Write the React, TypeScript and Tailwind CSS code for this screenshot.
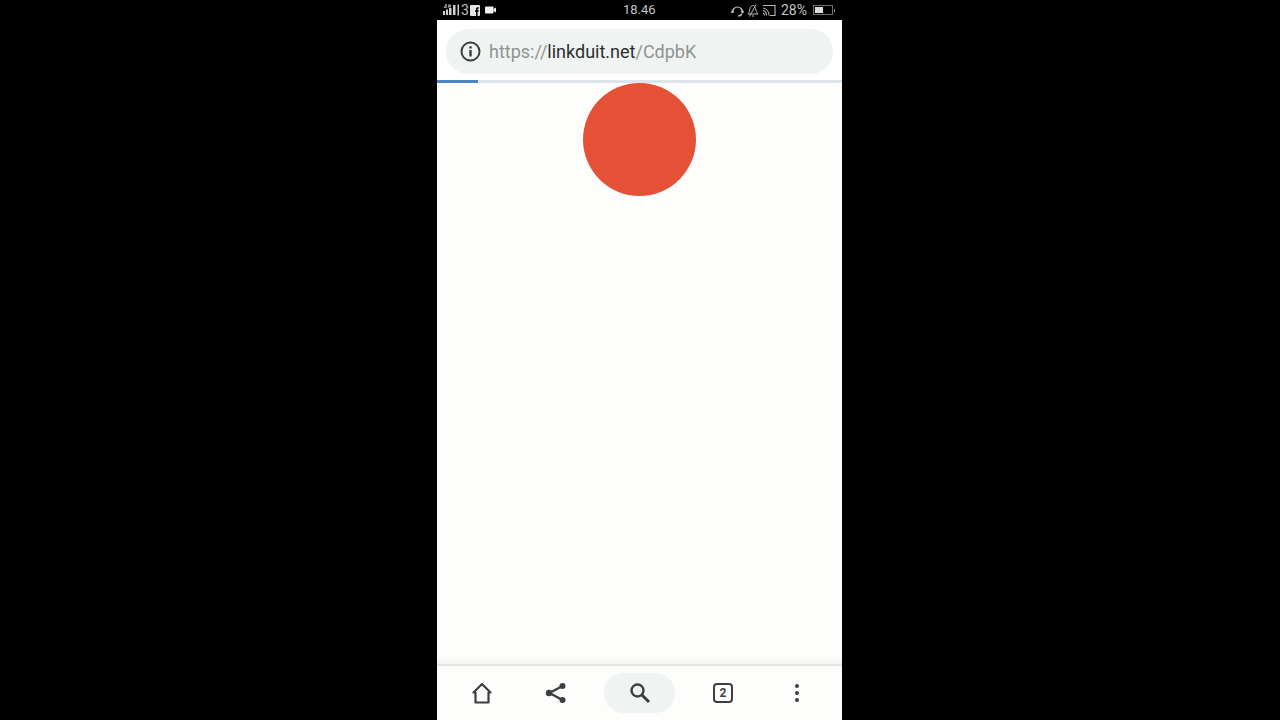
const font = { sans: "font-['Roboto','Liberation_Sans',sans-serif]" };

function SignalIcon() {
  return (
    <svg width="16" height="12" viewBox="0 0 16 12" fill="#d0d0d0">
      <rect x="0" y="7" width="2" height="4" />
      <rect x="3" y="5.500" width="2" height="5.500" />
      <rect x="6" y="4" width="2.500" height="7" />
      <rect x="10" y="1" width="2.500" height="10" />
      <rect x="14.500" y="0.500" width="1.500" height="11" />
      <rect x="2" y="0.500" width="2" height="1.200" />
      <rect x="5" y="0.500" width="3" height="3" opacity="0.7" />
      <rect x="1" y="2.500" width="3" height="1.200" />
    </svg>
  );
}

function FacebookIcon() {
  return (
    <svg width="10" height="11" viewBox="0 0 10 11">
      <rect width="10" height="11" rx="1" fill="#e4e4e4" />
      <path d="M7.600 11V6.800h1.100V5.300H7.600V4.400c0-.5.200-.8.800-.8h.5V2.200H7.700C6.500 2.200 6 3 6 4.100v1.200H5v1.500h1V11z" fill="#000" />
    </svg>
  );
}

function CameraIcon() {
  return (
    <svg width="11" height="8" viewBox="0 0 11 8" fill="#f2f2f2">
      <rect x="0" y="0.500" width="8.500" height="7" rx="1" />
      <path d="M8.500 3l2.500-1.400v4.800L8.500 5z" />
    </svg>
  );
}

function HeadsetIcon() {
  return (
    <svg width="13" height="13" viewBox="0 0 13 13" fill="none" stroke="#c8c8c8" strokeWidth="1.200">
      <path d="M1.500 8A5 5 0 1 1 11.500 8" />
      <path d="M1.500 6.500v2.500M11.500 6.500v2.500" strokeWidth="2.200" />
      <path d="M11 9.500c-.5 1.500-2 2.500-4 2.500" />
    </svg>
  );
}

function BellOffIcon() {
  return (
    <svg width="12" height="13" viewBox="0 0 12 13" fill="none" stroke="#b8b8b8" strokeWidth="1">
      <path d="M1 10c1.500-1.500 1.500-3.500 2-5.500S5 1.500 6 1.500 8 2.500 8.500 4.500 9.500 8.500 11 10z" />
      <path d="M5 12h2M2.500 12.500 9 .5" />
    </svg>
  );
}

function CastIcon() {
  return (
    <svg width="14" height="13" viewBox="0 0 14 13" fill="none" stroke="#b8b8b8" strokeWidth="1.100">
      <path d="M1 1.500h12v10H8" />
      <path d="M1 4A7.500 7.500 0 0 1 7 11.500M1 6.500a5 5 0 0 1 3.500 5M1 9a2.500 2.500 0 0 1 1.500 2.500" />
    </svg>
  );
}

function BatteryIcon() {
  return (
    <div className="flex items-center">
      <div className="flex h-[10px] w-[20px] items-stretch border border-[#6f6f6f] p-px">
        <div className="w-[8px] bg-[#dcdcdc]" />
      </div>
      <div className="ml-[1px] h-[3px] w-[1px] bg-[#8a8a8a]" />
    </div>
  );
}

function InfoIcon() {
  return (
    <svg width="21" height="21" viewBox="0 0 21 21" fill="none">
      <circle cx="10.500" cy="10.500" r="9" stroke="#3a3d3d" strokeWidth="2" />
      <rect x="9.300" y="9" width="2.400" height="6.500" fill="#3a3d3d" />
      <rect x="9.300" y="5.300" width="2.400" height="2.200" fill="#3a3d3d" />
    </svg>
  );
}

function HomeIcon() {
  return (
    <svg width="24" height="24" viewBox="0 0 24 24" fill="none" stroke="#3c3f3f" strokeWidth="2.200" strokeLinejoin="round">
      <path d="M12 3 3.500 11.500H5.500V21.500H18.500V11.500H20.500Z" />
    </svg>
  );
}

function ShareIcon() {
  return (
    <svg width="22" height="24" viewBox="0 0 22 24" fill="#3c3f3f" stroke="#3c3f3f">
      <path d="M17.500 5 4.500 12l13 7" fill="none" strokeWidth="2.400" />
      <circle cx="17.500" cy="5" r="3" stroke="none" />
      <circle cx="4" cy="12" r="3.200" stroke="none" />
      <circle cx="17.500" cy="19" r="3" stroke="none" />
    </svg>
  );
}

function SearchIcon() {
  return (
    <svg width="22" height="22" viewBox="0 0 22 22" fill="none" stroke="#3c3f3f">
      <circle cx="8.500" cy="8.500" r="6" strokeWidth="2.400" />
      <path d="M13 13l7 7" strokeWidth="3" />
    </svg>
  );
}

export default function App() {
  return (
    <div className={`flex h-[720px] w-[1280px] justify-center overflow-hidden bg-black ${font.sans}`}>
      <div className="ml-[-1px] flex h-full w-[405px] flex-col bg-[#fdfefc]">
        {/* Status bar */}
        <div className="relative flex h-[20px] shrink-0 items-center justify-between bg-black pl-[6px] pr-[7px] text-[13px] text-[#c4c4c4]">
          <div className="flex items-center">
            <SignalIcon />
            <span className="ml-[2px] text-[14px] leading-none">3</span>
            <span className="ml-[1px] flex"><FacebookIcon /></span>
            <span className="ml-[5px] flex"><CameraIcon /></span>
          </div>
          <span className="absolute left-[186px] top-[2px] leading-4 text-[#c4c4c4]">18.46</span>
          <div className="flex items-center gap-[3px]">
            <HeadsetIcon />
            <BellOffIcon />
            <CastIcon />
            <span className="ml-[2px] text-[14px] leading-none">28%</span>
            <span className="ml-[3px] flex"><BatteryIcon /></span>
          </div>
        </div>

        {/* URL bar */}
        <div className="h-[60px] shrink-0 bg-white px-[9px] pt-[9px]">
          <div className="flex h-[45px] items-center rounded-[22px] bg-[#eff3f1] pl-[14px]">
            <InfoIcon />
            <div className="ml-[8px] text-[18px] text-[#8f9492]">
              https://<span className="text-[#2c2f2f]">linkduit.net</span>/CdpbK
            </div>
          </div>
        </div>

        {/* Progress */}
        <div className="h-[3px] shrink-0 bg-[#dbe5ec]">
          <div className="h-full w-[41px] bg-[#4a86c5]" />
        </div>

        {/* Page */}
        <div className="flex min-h-0 flex-1 flex-col">
          <div className="mx-auto h-[113px] w-[113px] shrink-0 rounded-full bg-[#e55137]" />
          <div className="mt-auto h-[8px] shrink-0 bg-gradient-to-b from-[#fdfefc] to-[#f3f4f2]" />
        </div>

        {/* Bottom toolbar */}
        <div className="flex h-[56px] shrink-0 items-center border-t-2 border-[#e4e6e4] bg-[#fdfefc] pb-[1px] pl-[33px]">
          <HomeIcon />
          <div className="ml-[51px] flex"><ShareIcon /></div>
          <div className="ml-[37px] flex h-[40px] w-[71px] items-center justify-center rounded-[20px] bg-[#eff3f1]">
            <SearchIcon />
          </div>
          <div className="ml-[38px] flex h-[20px] w-[20px] items-center justify-center rounded-[4px] border-2 border-[#3c3f3f] text-[12px] font-bold leading-none text-[#3c3f3f]">2</div>
          <div className="ml-[62px] flex flex-col gap-[3px]">
            <div className="h-[4px] w-[4px] rounded-full bg-[#3c3f3f]" />
            <div className="h-[4px] w-[4px] rounded-full bg-[#3c3f3f]" />
            <div className="h-[4px] w-[4px] rounded-full bg-[#3c3f3f]" />
          </div>
        </div>
      </div>
    </div>
  );
}
